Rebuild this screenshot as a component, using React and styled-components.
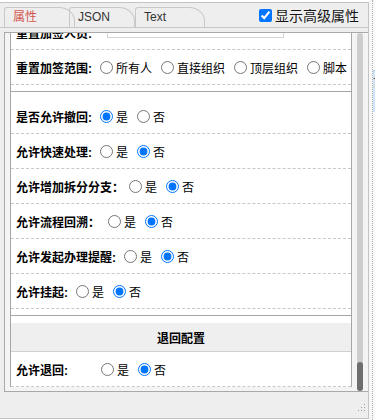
import React from 'react';
import styled, { createGlobalStyle } from 'styled-components';

const GlobalStyle = createGlobalStyle`
  html, body {
    margin: 0;
    padding: 0;
    background: #ffffff;
  }
  body {
    font-family: "Liberation Sans", "Noto Sans CJK SC", sans-serif;
    font-size: 12px;
    color: #000;
  }
`;

const sections = [
  {
    rows: [
      { label: '重置加签人员:', field: true },
      { label: '重置加签范围:', name: 'scope', options: ['所有人', '直接组织', '顶层组织', '脚本'], value: -1 },
    ],
  },
  {
    rows: [
      { label: '是否允许撤回:', name: 'recall', options: ['是', '否'], value: 0 },
      { label: '允许快速处理:', name: 'fast', options: ['是', '否'], value: 1 },
      { label: '允许增加拆分分支：', name: 'split', options: ['是', '否'], value: 1, gap: 5 },
      { label: '允许流程回溯：', name: 'trace', options: ['是', '否'], value: 1 },
      { label: '允许发起办理提醒:', name: 'remind', options: ['是', '否'], value: 1 },
      { label: '允许挂起:', name: 'hang', options: ['是', '否'], value: 1 },
    ],
  },
  {
    title: '退回配置',
    last: true,
    rows: [
      { label: '允许退回:', name: 'back', options: ['是', '否'], value: 1, width: 77 },
    ],
  },
];

const App = () => {
  return (
    <Page>
      <GlobalStyle />
      <Panel>
        <TabBar>
          <Tab $active $w={71}>属性</Tab>
          <Tab $w={66} $ml={-6}>JSON</Tab>
          <Tab $w={70} $ml={0}>Text</Tab>
          <AdvancedToggle>
            <input type="checkbox" defaultChecked />
            显示高级属性
          </AdvancedToggle>
        </TabBar>

        <Box>
          <Content>
            {sections.map((section, si) => (
              <Section key={si} $last={section.last}>
                {section.title && <SectionHeader>{section.title}</SectionHeader>}
                {section.rows.map((row, ri) => (
                  <Row key={ri}>
                    <Label $w={row.width}>{row.label}</Label>
                    {row.field && <FieldBox />}
                    {row.options && (
                      <Options $gap={row.gap}>
                        {row.options.map((opt, oi) => (
                          <Option key={oi}>
                            <input
                              type="radio"
                              name={row.name}
                              defaultChecked={oi === row.value}
                            />
                            {opt}
                          </Option>
                        ))}
                      </Options>
                    )}
                  </Row>
                ))}
              </Section>
            ))}
          </Content>
          <ScrollTrack>
            <ScrollThumb />
          </ScrollTrack>
        </Box>

        <Footer>
          <svg width="9" height="9" viewBox="0 0 9 9">
            <rect x="7" y="1" width="1" height="1" fill="#9a9a9a" />
            <rect x="4" y="4" width="1" height="1" fill="#9a9a9a" />
            <rect x="7" y="4" width="1" height="1" fill="#9a9a9a" />
            <rect x="1" y="7" width="1" height="1" fill="#9a9a9a" />
            <rect x="4" y="7" width="1" height="1" fill="#9a9a9a" />
            <rect x="7" y="7" width="1" height="1" fill="#9a9a9a" />
          </svg>
        </Footer>
      </Panel>

      <SideStrip>
        <Rail>
          <NeighbourTab>言语</NeighbourTab>
        </Rail>
      </SideStrip>
    </Page>
  );
};

const Page = styled.div`
  width: 375px;
  height: 420px;
  display: flex;
  overflow: hidden;
  background: #ffffff;
`;

const Panel = styled.div`
  width: 369px;
  height: 417px;
  margin-top: 2px;
  box-sizing: border-box;
  border-top: 1px solid #c4c4c4;
  border-right: 1px solid #c4c4c4;
  border-bottom: 1px solid #c4c4c4;
  background: #eeeeee;
  display: flex;
  flex-direction: column;
  flex-shrink: 0;
`;

const TabBar = styled.div`
  height: 25px;
  box-sizing: border-box;
  border-bottom: 1px solid #c8c8c8;
  display: flex;
  align-items: flex-end;
  padding: 0 9px 0 4px;
`;

const Tab = styled.div`
  width: ${p => p.$w}px;
  margin-left: ${p => p.$ml || 0}px;
  height: 20px;
  box-sizing: border-box;
  border: 1px solid #c8c8c8;
  border-bottom: none;
  border-top-left-radius: 3px;
  border-top-right-radius: 16px 14px;
  padding-left: 8px;
  font-size: 12px;
  line-height: 19px;
  color: ${p => (p.$active ? '#d4574e' : '#333333')};
  background: transparent;
`;

const AdvancedToggle = styled.label`
  margin-left: auto;
  align-self: center;
  display: flex;
  align-items: center;
  gap: 3px;
  font-size: 14px;
  color: #151515;

  input {
    margin: 0;
    width: 13px;
    height: 13px;
  }
`;

const Box = styled.div`
  margin: 4px 0 0 4px;
  height: 360px;
  box-sizing: border-box;
  border: 1px solid #a9a9a9;
  border-right: none;
  background: #f4f4f4;
  display: flex;
  padding-left: 5px;
`;

const Content = styled.div`
  width: 342px;
  display: flex;
  flex-direction: column;
  justify-content: flex-end;
  overflow: hidden;
  padding-bottom: 4px;
`;

const Section = styled.div`
  flex-shrink: 0;
  background: #ffffff;
  border: 1px solid #a6a6a6;
  border-top: none;
  padding: 7px 0 6px;
  ${p => p.$last && 'border-bottom: none; padding-bottom: 0;'}
`;

const SectionHeader = styled.div`
  height: 28px;
  border-bottom: 1px solid #d0d0d0;
  background: #efefef;
  display: flex;
  align-items: center;
  justify-content: center;
  font-weight: bold;
`;

const Row = styled.div`
  height: 35px;
  box-sizing: border-box;
  border-bottom: 1px dashed #c8c8c8;
  display: flex;
  align-items: center;
  padding-left: 5px;
`;

const Label = styled.span`
  font-weight: bold;
  white-space: nowrap;
  ${p => p.$w && `min-width: ${p.$w}px;`}
`;

const FieldBox = styled.div`
  width: 177px;
  height: 22px;
  margin: -10px 0 0 15px;
  box-sizing: border-box;
  border: 1px solid #d4d4d4;
  background: #ffffff;
`;

const Options = styled.div`
  display: flex;
  align-items: center;
  margin-left: ${p => (p.$gap != null ? p.$gap : 8)}px;
  gap: 9px;
`;

const Option = styled.label`
  display: inline-flex;
  align-items: center;
  gap: 3px;
  white-space: nowrap;

  input {
    margin: 0;
    width: 13px;
    height: 13px;
  }
`;

const ScrollTrack = styled.div`
  width: 6px;
  margin-left: 5px;
  border-radius: 3px;
  background: #cdcdcd;
  display: flex;
  flex-direction: column;
  justify-content: flex-end;
`;

const ScrollThumb = styled.div`
  height: 29px;
  border-radius: 3px;
  background: #6e6e6e;
`;

const Footer = styled.div`
  flex: 1;
  display: flex;
  justify-content: flex-end;
  align-items: flex-end;
  padding: 0 2px 6px 0;
`;

const SideStrip = styled.div`
  flex: 1;
  background: #f7f7f7;
  padding-left: 3px;
  display: flex;
`;

const Rail = styled.div`
  flex: 1;
  border-left: 1px dotted #b0b0b0;
  padding-top: 70px;
  overflow: hidden;
`;

const NeighbourTab = styled.div`
  height: 42px;
  box-sizing: border-box;
  border-top: 1px solid #9cc2ea;
  background: #cfe3f8;
  color: #222;
  font-size: 12px;
  white-space: nowrap;
  padding-top: 2px;
`;

export default App;
